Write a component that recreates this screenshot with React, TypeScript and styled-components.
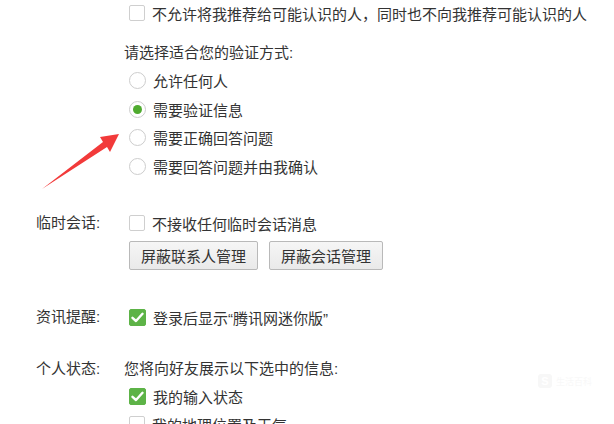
import React from "react";
import styled, { createGlobalStyle } from "styled-components";

const Global = createGlobalStyle`
  html, body { margin: 0; padding: 0; background: #fff; }
  body {
    font-family: "Liberation Sans", "Noto Sans CJK SC", sans-serif;
    color: #333;
    font-size: 15px;
  }
`;

const Page = styled.div`
  position: relative;
  width: 614px;
  height: 424px;
  overflow: hidden;
  padding-left: 36px;
  box-sizing: border-box;
`;

const Section = styled.div<{ $mt?: number }>`
  display: grid;
  grid-template-columns: 88px 1fr;
  margin-top: ${(p) => p.$mt ?? 0}px;
`;

const Label = styled.div`
  height: 28px;
  line-height: 28px;
  color: #333;
  white-space: nowrap;
`;

const Content = styled.div`
  display: flex;
  flex-direction: column;
`;

const Heading = styled.div<{ $h?: number; $mt?: number }>`
  height: ${(p) => p.$h ?? 28}px;
  line-height: ${(p) => p.$h ?? 28}px;
  margin-top: ${(p) => p.$mt ?? 0}px;
  white-space: nowrap;
`;

const Option = styled.label<{ $h?: number }>`
  display: flex;
  align-items: center;
  height: ${(p) => p.$h ?? 28}px;
  padding-left: 5px;
  white-space: nowrap;
  gap: 7px;
`;

const Box = styled.span<{ $on?: boolean }>`
  box-sizing: border-box;
  width: ${(p) => (p.$on ? 17 : 16)}px;
  height: ${(p) => (p.$on ? 17 : 16)}px;
  flex: none;
  border-radius: 2px;
  display: flex;
  align-items: center;
  justify-content: center;
  background: ${(p) => (p.$on ? "#5db347" : "#fff")};
  border: 1px solid ${(p) => (p.$on ? "#5db347" : "#cfcfcf")};
`;

const Radio = styled.span<{ $on?: boolean }>`
  box-sizing: border-box;
  width: 17px;
  height: 17px;
  flex: none;
  border-radius: 50%;
  border: 1px solid #cdcdcd;
  background: #fff;
  display: flex;
  align-items: center;
  justify-content: center;
  &::after {
    content: "";
    display: ${(p) => (p.$on ? "block" : "none")};
    width: 9px;
    height: 9px;
    border-radius: 50%;
    background: #4fab2f;
  }
`;

const Buttons = styled.div`
  display: flex;
  gap: 11px;
  margin-top: 4px;
  padding-left: 5px;
`;

const Button = styled.button`
  height: 29px;
  padding: 0 11px;
  font-family: inherit;
  font-size: 15px;
  color: #333;
  border: 1px solid #b9b9b9;
  border-radius: 2px;
  background: linear-gradient(#f6f6f6, #e9e9e9);
  white-space: nowrap;
`;

const Overlay = styled.svg`
  position: absolute;
  left: 0;
  top: 0;
  pointer-events: none;
`;

const Watermark = styled.div`
  position: absolute;
  right: 22px;
  bottom: 36px;
  display: flex;
  align-items: center;
  gap: 4px;
  color: #f8f8f8;
  font-size: 9px;
`;

const WmBadge = styled.span`
  width: 14px;
  height: 14px;
  border-radius: 3px;
  background: #f7f7f7;
  color: #fff;
  font-size: 11px;
  font-weight: bold;
  display: flex;
  align-items: center;
  justify-content: center;
`;

const Check = () => (
  <svg width="13" height="11" viewBox="0 0 13 11">
    <path d="M1.5 5.8 L5 9 L11.5 1.8" fill="none" stroke="#fff" strokeWidth="2.4" strokeLinecap="round" strokeLinejoin="round" />
  </svg>
);

export default function App() {
  return (
    <>
      <Global />
      <Page>
        <Section $mt={-1}>
          <div />
          <Content>
            <Option>
              <Box />
              不允许将我推荐给可能认识的人，同时也不向我推荐可能认识的人
            </Option>
            <Heading $h={26} $mt={13}>请选择适合您的验证方式:</Heading>
            <Option $h={29}><Radio />允许任何人</Option>
            <Option $h={28}><Radio $on />需要验证信息</Option>
            <Option $h={29}><Radio />需要正确回答问题</Option>
            <Option $h={29}><Radio />需要回答问题并由我确认</Option>
          </Content>
        </Section>

        <Section $mt={28}>
          <Label>临时会话:</Label>
          <Content>
            <Option><Box />不接收任何临时会话消息</Option>
            <Buttons>
              <Button>屏蔽联系人管理</Button>
              <Button>屏蔽会话管理</Button>
            </Buttons>
          </Content>
        </Section>

        <Section $mt={33}>
          <Label>资讯提醒:</Label>
          <Content>
            <Option><Box $on><Check /></Box>登录后显示“腾讯网迷你版”</Option>
          </Content>
        </Section>

        <Section $mt={24}>
          <Label>个人状态:</Label>
          <Content>
            <Heading>您将向好友展示以下选中的信息:</Heading>
            <Option $h={27}><Box $on><Check /></Box>我的输入状态</Option>
            <Option><Box />我的地理位置及天气</Option>
          </Content>
        </Section>

        <Watermark>
          <WmBadge>S</WmBadge>
          <span>生活百科</span>
        </Watermark>

        <Overlay width="614" height="424" viewBox="0 0 614 424">
          <polygon
            points="42,189 103,142 100,137 119,134 110,152 107,147"
            fill="#f23a3a"
          />
        </Overlay>
      </Page>
    </>
  );
}
